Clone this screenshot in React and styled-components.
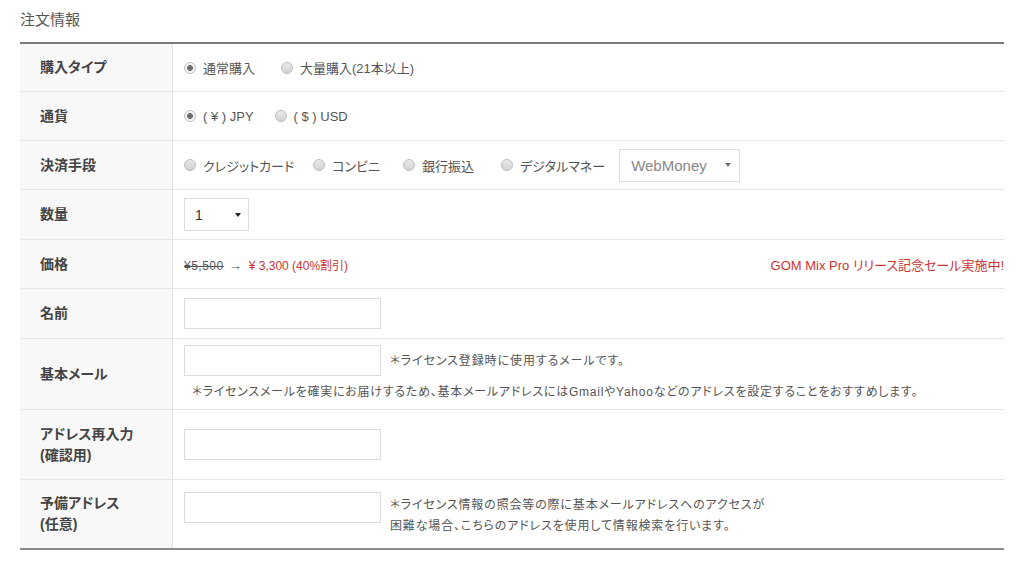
import React from "react";
import styled, { createGlobalStyle } from "styled-components";

const GlobalStyle = createGlobalStyle`
  html, body { margin: 0; padding: 0; background: #fff; }
  body {
    font-family: "Liberation Sans", "Noto Sans CJK JP", sans-serif;
    font-feature-settings: "palt";
    color: #555;
  }
  * { box-sizing: border-box; }
`;

const Page = styled.div`
  width: 1024px;
  padding: 9px 20px 0 20px;
`;

const Title = styled.h2`
  margin: 0 0 12px;
  font-size: 15px;
  font-weight: normal;
  color: #555;
  line-height: 21px;
`;

const Table = styled.div`
  border-top: 2px solid #7b7b7b;
  border-bottom: 2px solid #8a8a8a;
  width: 984px;
`;

const Row = styled.div`
  display: grid;
  grid-template-columns: 153px 1fr;
  min-height: ${(p) => p.$h || 49}px;
  border-bottom: ${(p) => (p.$last ? "none" : "1px solid #e6e6e6")};
`;

const Label = styled.div`
  background: #f8f8f8;
  border-right: 1px solid #e3e3e3;
  padding: 0 20px;
  display: flex;
  align-items: center;
  font-size: 14px;
  font-weight: bold;
  color: #444;
  line-height: 21px;
`;

const Cell = styled.div`
  display: flex;
  align-items: ${(p) => p.$align || "center"};
  justify-content: ${(p) => p.$justify || "flex-start"};
  flex-direction: ${(p) => p.$dir || "row"};
  padding: ${(p) => p.$pad || "0 0 0 11px"};
  font-size: 12px;
  color: #555;
`;

const Option = styled.label`
  display: inline-flex;
  align-items: center;
  gap: 7px;
  font-size: 13px;
  color: #555;
  margin-right: ${(p) => p.$mr ?? 24}px;
  white-space: nowrap;
`;

const Radio = styled.input.attrs({ type: "radio" })`
  appearance: none;
  margin: 0;
  width: 12px;
  height: 12px;
  border-radius: 50%;
  border: 1px solid #bdbdbd;
  background: ${(p) =>
    p.defaultChecked
      ? "radial-gradient(circle, #6d6d6d 0 2.6px, #f4f4f4 3.2px)"
      : "linear-gradient(#e9e9e9, #d2d2d2)"};
`;

const SelectBox = styled.div`
  position: relative;
  width: ${(p) => p.$w}px;
  height: 33px;
  border: 1px solid #ddd;
  background: #fff;
`;

const SelectEl = styled.select`
  appearance: none;
  width: 100%;
  height: 100%;
  border: none;
  background: transparent;
  padding: 0 0 0 ${(p) => p.$pl || 10}px;
  font-family: "Liberation Sans", "Noto Sans CJK JP", sans-serif;
  font-size: ${(p) => p.$fs || 14}px;
  color: ${(p) => p.$color || "#333"};
  outline: none;
`;

const Caret = styled.span`
  position: absolute;
  right: ${(p) => p.$r || 9}px;
  top: 50%;
  transform: translateY(-50%);
  width: 0;
  height: 0;
  border-left: ${(p) => p.$s || 3.5}px solid transparent;
  border-right: ${(p) => p.$s || 3.5}px solid transparent;
  border-top: ${(p) => (p.$s || 3.5) * 1.4}px solid ${(p) => p.$c || "#222"};
  pointer-events: none;
`;

const TextInput = styled.input.attrs({ type: "text" })`
  width: 197px;
  height: 31px;
  border: 1px solid #dcdcdc;
  margin: 0;
  padding: 0 8px;
  background: #fff;
  flex: none;
`;

const Old = styled.span`
  text-decoration: line-through;
  color: #555;
  font-size: 12px;
  letter-spacing: 0.5px;
`;

const Arrow = styled.span`
  font-size: 13px;
  margin: 0 7px 0 5px;
  color: #555;
`;

const Red = styled.span`
  color: #c33;
  font-size: ${(p) => p.$fs || 12}px;
`;

const Note = styled.div`
  font-size: 12px;
  line-height: ${(p) => p.$lh || 18}px;
  color: #555;
  margin: ${(p) => p.$m || "0"};
  letter-spacing: ${(p) => p.$ls ?? 0.9}px;
`;

const InputLine = styled.div`
  display: flex;
  align-items: ${(p) => p.$align || "center"};
  gap: 9px;
`;

export default function App() {
  return (
    <>
      <GlobalStyle />
      <Page>
        <Title>注文情報</Title>
        <Table>
          <Row $h={48}>
            <Label>購入タイプ</Label>
            <Cell>
              <Option $mr={26}><Radio name="t" defaultChecked />通常購入</Option>
              <Option><Radio name="t" />大量購入(21本以上)</Option>
            </Cell>
          </Row>
          <Row>
            <Label>通貨</Label>
            <Cell>
              <Option $mr={21}><Radio name="c" defaultChecked />( ¥ ) JPY</Option>
              <Option><Radio name="c" />( $ ) USD</Option>
            </Cell>
          </Row>
          <Row>
            <Label>決済手段</Label>
            <Cell>
              <Option $mr={19}><Radio name="p" />クレジットカード</Option>
              <Option $mr={23}><Radio name="p" />コンビニ</Option>
              <Option $mr={27}><Radio name="p" />銀行振込</Option>
              <Option $mr={14}><Radio name="p" />デジタルマネー</Option>
              <SelectBox $w={121}>
                <SelectEl $pl={11} $fs={15} $color="#888" defaultValue="WebMoney">
                  <option>WebMoney</option>
                </SelectEl>
                <Caret $r={8} $s={3} $c="#777" />
              </SelectBox>
            </Cell>
          </Row>
          <Row $h={50}>
            <Label>数量</Label>
            <Cell>
              <SelectBox $w={65}>
                <SelectEl $pl={10} defaultValue="1">
                  <option>1</option>
                </SelectEl>
                <Caret $r={7} />
              </SelectBox>
            </Cell>
          </Row>
          <Row>
            <Label>価格</Label>
            <Cell $justify="space-between">
              <span>
                <Old>¥5,500</Old>
                <Arrow>→</Arrow>
                <Red>¥ 3,300 (40%割引)</Red>
              </span>
              <Red $fs={13}>GOM Mix Pro リリース記念セール実施中!</Red>
            </Cell>
          </Row>
          <Row $h={50}>
            <Label>名前</Label>
            <Cell>
              <TextInput />
            </Cell>
          </Row>
          <Row $h={71}>
            <Label>基本メール</Label>
            <Cell $dir="column" $align="flex-start" $pad="6px 0 8px 11px">
              <InputLine>
                <TextInput />
                <Note>＊ライセンス登録時に使用するメールです。</Note>
              </InputLine>
              <Note $m="7px 0 0 8px" $ls={0.75}>
                ＊ライセンスメールを確実にお届けするため、基本メールアドレスにはGmailやYahooなどのアドレスを設定することをおすすめします。
              </Note>
            </Cell>
          </Row>
          <Row $h={70}>
            <Label>
              アドレス再入力
              <br />
              (確認用)
            </Label>
            <Cell>
              <TextInput />
            </Cell>
          </Row>
          <Row $h={68} $last>
            <Label>
              予備アドレス
              <br />
              (任意)
            </Label>
            <Cell $align="flex-start" $pad="12px 0 0 11px">
              <InputLine $align="flex-start">
                <TextInput />
                <Note $lh={21} $m="3px 0 0 0" $ls={0.85}>
                  ＊ライセンス情報の照会等の際に基本メールアドレスへのアクセスが
                  <br />
                  困難な場合、こちらのアドレスを使用して情報検索を行います。
                </Note>
              </InputLine>
            </Cell>
          </Row>
        </Table>
      </Page>
    </>
  );
}
